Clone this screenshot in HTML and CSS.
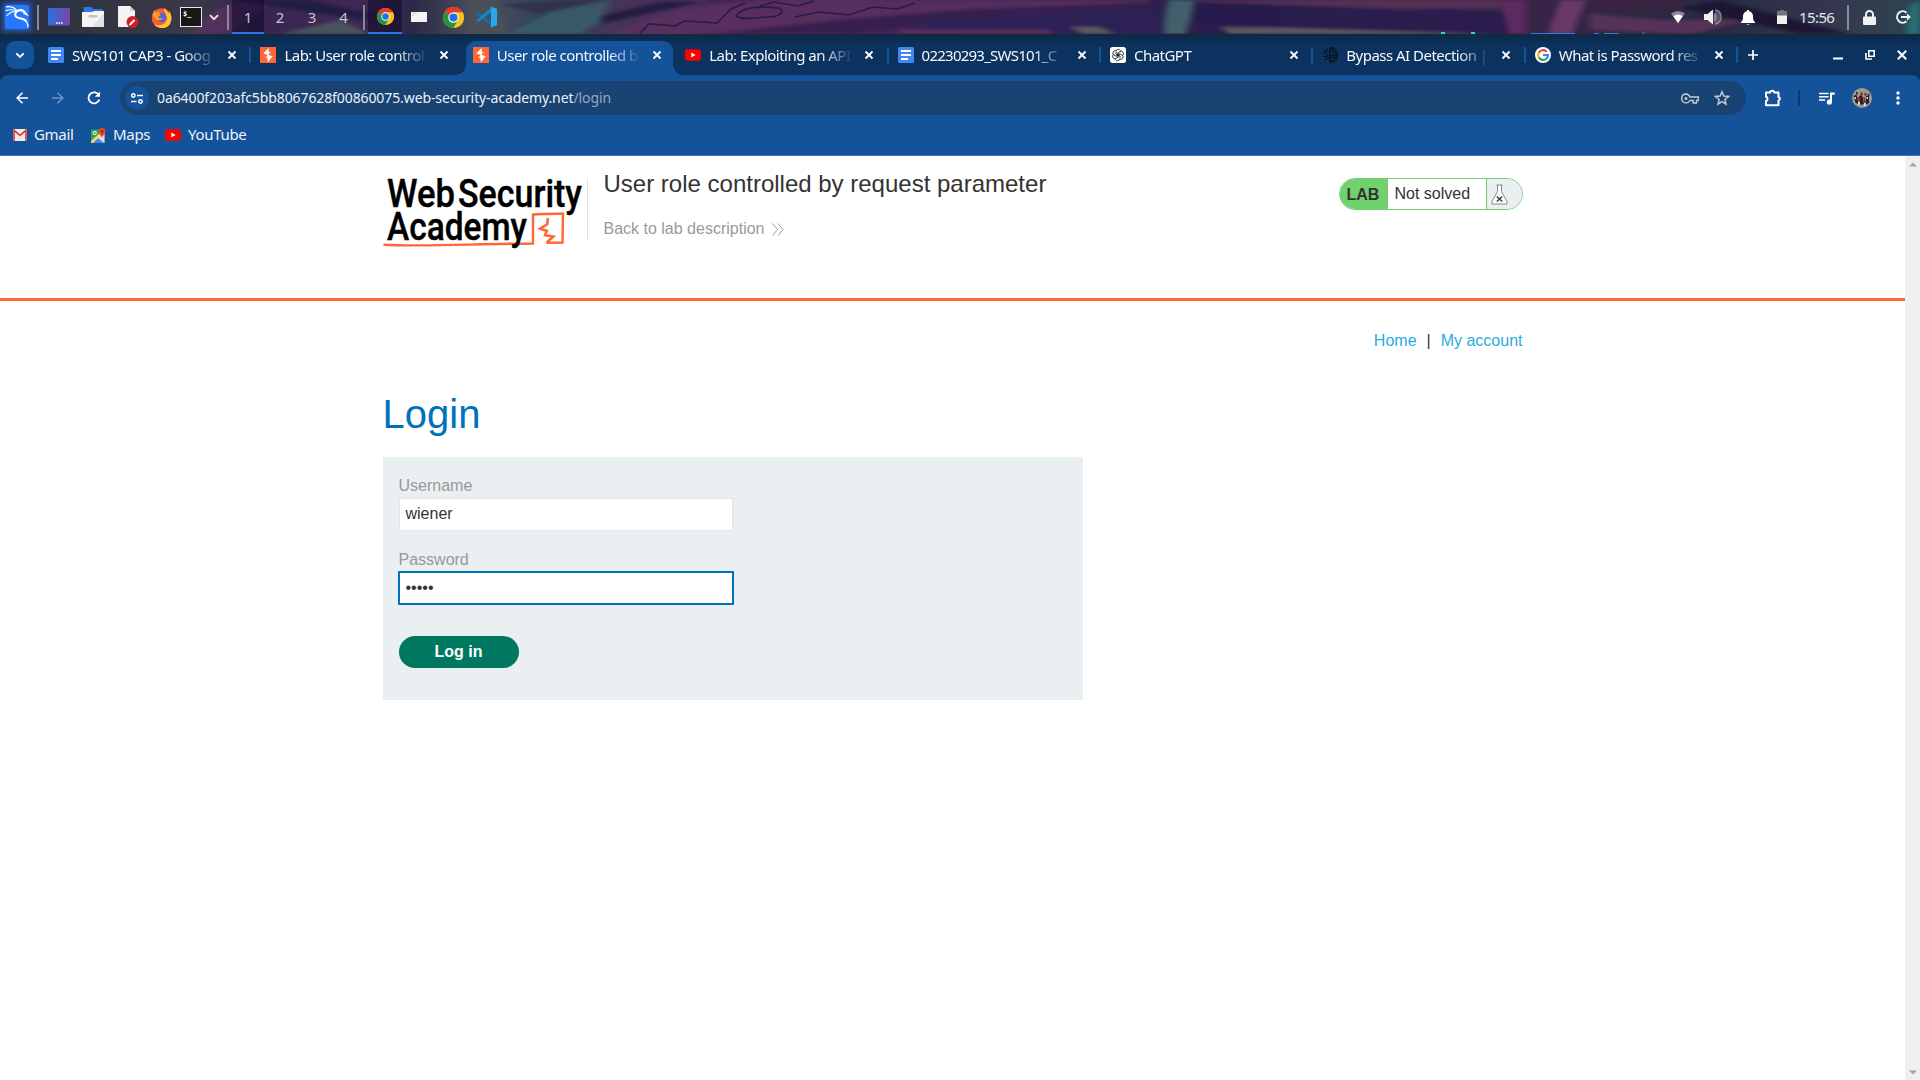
FILE: index.html
```html
<!DOCTYPE html>
<html lang="en">
<head>
<meta charset="utf-8">
<title>User role controlled by request parameter</title>
<link rel="stylesheet" href="styles.css">
</head>
<body>
<svg width="0" height="0" class="defs" aria-hidden="true">
  <defs>
    <linearGradient id="deskG" x1="0" x2="1"><stop offset="0" stop-color="#2f6fdc"/><stop offset="1" stop-color="#7648ad"/></linearGradient>
    <symbol id="close" viewBox="0 0 10 10"><path d="M1.500 1.500l7 7M8.500 1.500l-7 7" stroke="#fff" stroke-width="1.800" fill="none"/></symbol>
    <symbol id="doc" viewBox="0 0 16 16"><rect width="16" height="16" rx="1.500" fill="#4285f4"/><path d="M3 4h10M3 8h10M3 12h7" stroke="#fff" stroke-width="2"/></symbol>
    <symbol id="burp" viewBox="0 0 16 16"><rect width="16" height="16" fill="#ff6633"/><path d="M8.600 1L3.300 6.500 7.200 7.800v2L5 9.500l2.700 2.200V15.500L12.700 9.200 8.800 8V6l2.400.5-2.600-2.400z" fill="#fff"/></symbol>
    <symbol id="yt" viewBox="0 0 16 16"><rect y="2.300" width="16" height="11.400" rx="2.600" fill="#f00"/><path d="M6.300 5.500v5L10.600 8z" fill="#fff"/></symbol>
    <symbol id="chrome" viewBox="0 0 20 20"><circle cx="10" cy="10" r="10" fill="#fbc116"/><path d="M10 10L1.340 5A10 10 0 0 1 18.660 5z" fill="#e33b2e"/><path d="M10 5h8.660A10 10 0 0 0 1.340 5z" fill="#e33b2e"/><path d="M1.340 5A10 10 0 0 0 10 20l4.330-7.500L10 10z" fill="#229342"/><path d="M14.330 12.500L10 20A10 10 0 0 0 18.660 5H10z" fill="#fbc116"/><circle cx="10" cy="10" r="5" fill="#fff"/><circle cx="10" cy="10" r="3.900" fill="#1a73e8"/></symbol>
  </defs>
</svg>

<div class="panel">
  <svg class="wallpaper" viewBox="0 0 1920 34" preserveAspectRatio="none">
    <defs>
      <linearGradient id="wp" x1="0" x2="1">
        <stop offset="0" stop-color="#23304a"/><stop offset=".04" stop-color="#30343f"/><stop offset=".1" stop-color="#3c3848"/><stop offset=".13" stop-color="#35254f"/><stop offset=".18" stop-color="#412856"/><stop offset=".215" stop-color="#2c2948"/><stop offset=".25" stop-color="#4b525c"/><stop offset=".28" stop-color="#33445a"/><stop offset=".32" stop-color="#453457"/><stop offset=".38" stop-color="#50285d"/><stop offset=".45" stop-color="#432858"/><stop offset=".5" stop-color="#39235a"/><stop offset=".56" stop-color="#33244f"/><stop offset=".64" stop-color="#271d49"/><stop offset=".7" stop-color="#35304b"/><stop offset=".75" stop-color="#3e294f"/><stop offset=".8" stop-color="#372447"/><stop offset=".85" stop-color="#302741"/><stop offset=".9" stop-color="#292b44"/><stop offset=".96" stop-color="#353950"/><stop offset="1" stop-color="#2a4550"/>
      </linearGradient>
      <filter id="soft" x="-5%" y="-50%" width="110%" height="200%"><feGaussianBlur stdDeviation="3 1.600"/></filter>
    </defs>
    <rect width="1920" height="34" fill="url(#wp)"/>
    <g filter="url(#soft)">
      <path d="M190 34L215 10 250 0h22l-42 34z" fill="#6b2f72" opacity=".5"/>
      <path d="M232 0l130 20 10-6-60-14z" fill="#1c1540" opacity=".8"/>
      <path d="M280 34l60-14 30 14z" fill="#4a525b"/>
      <path d="M470 0h24l12 34h-36z" fill="#4c5057"/>
      <path d="M508 34L560 8 610 0 600 22 580 34z" fill="#37656b" opacity=".7"/>
      <path d="M500 4l80-4h30l-70 14z" fill="#31314e"/>
      <path d="M600 16l60-14 140-2h-90L600 24z" fill="#241c40"/>
      <path d="M610 34l60-22 90-12h390v3l-180 6-150 12-130 13z" fill="#5c305f" opacity=".8"/>
      <path d="M720 34l120-14 130-10 180-8v5l-130 7-170 20z" fill="#341d4c" opacity=".9"/>
      <path d="M930 20l240-10v24H920z" fill="#2a2057" opacity=".8"/>
      <path d="M1190 2l210 4 110 6v22h-90l-230-10z" fill="#251a4d" opacity=".8"/>
      <path d="M1190 0h310v8l-100 1-200-7z" fill="#563154" opacity=".9"/>
      <path d="M900 30h150v4H900z" fill="#5d2d5a"/>
      <path d="M1070 27h30l14 7h-30zM1220 27l70 1 200 6h-260z" fill="#5c5860"/>
      <path d="M1168 0h26l-8 34h-22z" fill="#43606c"/>
      <path d="M1500 0h26v34h-16z" fill="#5c2c60"/>
      <path d="M1560 0h26l-14 34h-24z" fill="#6b3966"/>
      <path d="M1590 14l70 6 90 0-60 14-100-4z" fill="#573258"/>
      <path d="M1592 0h90v10l-80-2z" fill="#3b2440"/>
      <path d="M1720 0l130 34h-50l-120-26z" fill="#1a1930"/>
      <path d="M1910 6l10-6v34h-14z" fill="#287173"/>
    </g>
    <path d="M640 33l9-9 26 2 10-5 32 2 14-14 14-6M736 16c6-10 24-10 42-8 10 3 0 9-10 9s-24 4-32-1M760 6l14-4 24 4 16-5M795 17l24-5 30 3 24-8 24 2 18-6" stroke="#2a1b45" stroke-width="1.700" fill="none"/>
    <path d="M1441 33h4M1471 33h4" stroke="#1ee0cf" stroke-width="2"/><path d="M1531 33.500h44M1594 33.500h5M1604 33.500h15M1642 33h3" stroke="#2b7bf0"/>
  </svg>
  <div class="panel-left">
    <span class="kali"><svg width="24" height="24" viewBox="0 0 24 24"><rect width="24" height="24" rx="1.500" fill="#2878ff"/><g fill="none" stroke="#fff" stroke-linecap="round"><path d="M1.300 1.800C6 1.300 9.500 2.500 12 5.800" stroke-width="1.300"/><path d="M1 5.500C5 4.300 9 4.500 12 6.200M2 10.500C4.500 7.500 8 6.200 12 6.500" stroke-width="1.100"/><path d="M12 6c3-1.300 6-.8 7.500 1.200" stroke-width="2.200"/><path d="M16 4.500l3.500 2 2.500 3.300-3.200-1.300" stroke-width="1.300"/><path d="M11.800 6.500C8.500 9.500 10.500 12.700 14.500 13.300c3.500.5 5.500 1.200 6.500 3" stroke-width="2"/><path d="M18 13.800c3 1.200 4.800 4 5 8.200" stroke-width="1.200"/></g></svg></span>
    <i class="bar"></i>
    <span class="cell w34"><svg width="22" height="18" viewBox="0 0 22 18"><rect width="22" height="17.500" rx="1" fill="url(#deskG)"/><path d="M8 15h1.500M10.500 15H12M13 15h1.500" stroke="#fff" stroke-width="1.500"/></svg></span>
    <span class="cell w34"><svg width="22" height="20" viewBox="0 0 22 20"><path d="M1.500 0h8l1.500 2h9.500v8h-19z" fill="#2f74e8"/><path d="M0 5h10l2-1h10v16H0z" fill="#f4f4f4"/><path d="M22 6v14H10z" fill="#e2e2e2"/><rect x="6.500" y="8" width="9" height="2.500" rx="1" fill="#c4c4c4"/></svg></span>
    <span class="cell w36"><svg width="21" height="22" viewBox="0 0 21 22"><path d="M0 0h12l5 5v16H0z" fill="#f3f3f3"/><path d="M12 0v5h5z" fill="#cfcfcf"/><circle cx="14.500" cy="16" r="6" fill="#d01f28"/><path d="M11.500 19l5-5" stroke="#fff" stroke-width="1.800"/></svg></span>
    <span class="cell w30"><svg width="21" height="21" viewBox="0 0 21 21"><circle cx="10.500" cy="11" r="9.800" fill="#ff5b2e"/><path d="M13 1c3 2 4 4 4 6 1-1 1-2 1-3 4 5 3 13-2 16-6 3-11 0-13-3 6 3 13 0 13-6 0-4-3-5-3-10z" fill="#ffc531"/><circle cx="10.500" cy="10.500" r="4.800" fill="#5265d8"/><path d="M1.500 8L3 3l2 2.500L8 5l1.500 3L7 10.500c2 1 3 1 5 0-1 3-5 4-8 1z" fill="#ff9b24"/></svg></span>
    <span class="cell w30"><span class="term">$_</span></span>
    <span class="cell w16"><svg width="10" height="7" viewBox="0 0 10 7"><path d="M1 1.200l4 4 4-4" fill="none" stroke="#eee" stroke-width="1.700"/></svg></span>
    <i class="bar bar2"></i>
    <span class="cell ws on">1</span><span class="cell ws">2</span><span class="cell ws">3</span><span class="cell ws w31">4</span>
    <i class="bar bar3"></i>
    <span class="cell w34 on"><svg width="17" height="17"><use href="#chrome"/></svg></span>
    <span class="cell w34"><svg width="16" height="10" viewBox="0 0 16 10"><rect width="16" height="10" fill="#f4f4f4"/><path d="M2 1.500h4M1 3.500h2" stroke="#ccc"/></svg></span>
    <span class="cell w34"><svg width="21" height="21"><use href="#chrome"/></svg></span>
    <span class="cell w34"><svg width="22" height="22" viewBox="0 0 22 22"><path d="M0 7.500L2 6l14 10.500V21z" fill="#0f70b3"/><path d="M0 14.500L2 16 16 5.500V1z" fill="#1387cf"/><path d="M15 .5l6 2.300v16.400L15 21.500z" fill="#2aa5f0"/></svg></span>
  </div>
  <div class="panel-right">
    <span class="cell w34"><svg width="16" height="14" viewBox="0 0 16 14"><path d="M1 3.500Q8-1.500 15 3.500L8 13z" fill="#8d8794"/><path d="M3.300 6.200Q8 3 12.700 6.200L8 13z" fill="#fff"/></svg></span>
    <span class="cell w36"><svg width="18" height="16" viewBox="0 0 18 16"><path d="M0 5h3.500L9 .5v15L3.500 11H0z" fill="#f0f0f0"/><path d="M10.500 4.500v7q3-3.500 0-7M11 1q6 .5 6 7t-6 7" fill="#8d8794" fill-opacity=".5" stroke="#8d8794" stroke-width="1.300"/></svg></span>
    <span class="cell w34"><svg width="14" height="15" viewBox="0 0 14 15"><path d="M7 0c1 0 1.300.6 1.300 1.300C11 2 12 4 12 6.500c0 3 .5 4.500 2 5.500v1H0v-1c1.500-1 2-2.500 2-5.500C2 4 3 2 5.700 1.300 5.700.6 6 0 7 0zM5 14h4q-2 1.500-4 0z" fill="#fff"/></svg></span>
    <span class="cell w34"><svg width="10" height="14" viewBox="0 0 10 14"><path d="M0 1h3V0h4v1h3v5H0z" fill="#77727c"/><rect y="5.500" width="10" height="8.500" fill="#f0f0f0"/></svg></span>
    <span class="clock">15:56</span>
    <i class="bar bar4"></i>
    <span class="cell w34"><svg width="13" height="15" viewBox="0 0 13 15"><path d="M3 7V4.500a3.500 3.500 0 0 1 7 0V7" fill="none" stroke="#f0f0f0" stroke-width="2"/><rect y="6.500" width="13" height="8.500" rx="1" fill="#f0f0f0"/></svg></span>
    <span class="cell w34"><svg width="15" height="14" viewBox="0 0 15 14"><path d="M10.500 2.700A5.700 5.700 0 1 0 10.500 11.300" fill="none" stroke="#f0f0f0" stroke-width="2"/><path d="M5 6h6V3.500L15 7l-4 3.500V8H5z" fill="#f0f0f0"/></svg></span>
  </div>
</div>

<div class="tabstrip">
  <span class="tab-search"><svg width="10" height="7" viewBox="0 0 10 7"><path d="M1.300 1.300L5 5l3.700-3.700" fill="none" stroke="#fff" stroke-width="1.900"/></svg></span>
  <div class="tab sep"><svg class="fav"><use href="#doc"/></svg><span class="label">SWS101 CAP3 - Goog</span><svg class="x"><use href="#close"/></svg></div>
  <div class="tab"><svg class="fav"><use href="#burp"/></svg><span class="label">Lab: User role control</span><svg class="x"><use href="#close"/></svg></div>
  <div class="tab active"><svg class="fav"><use href="#burp"/></svg><span class="label">User role controlled b</span><svg class="x"><use href="#close"/></svg></div>
  <div class="tab sep"><svg class="fav"><use href="#yt"/></svg><span class="label">Lab: Exploiting an API</span><svg class="x"><use href="#close"/></svg></div>
  <div class="tab sep"><svg class="fav"><use href="#doc"/></svg><span class="label wide">02230293_SWS101_C</span><svg class="x"><use href="#close"/></svg></div>
  <div class="tab sep"><svg class="fav" viewBox="0 0 16 16"><rect width="16" height="16" rx="2.500" fill="#fff"/><g fill="none" stroke="#222" stroke-width=".8"><path id="k" d="M6 7V4.500Q6 2.300 8.300 2.300q1.700 0 2.400 1.400M6 7l3.500 2"/><use href="#k" transform="rotate(60 8 8)"/><use href="#k" transform="rotate(120 8 8)"/><use href="#k" transform="rotate(180 8 8)"/><use href="#k" transform="rotate(240 8 8)"/><use href="#k" transform="rotate(300 8 8)"/></g></svg><span class="label">ChatGPT</span><svg class="x"><use href="#close"/></svg></div>
  <div class="tab sep"><svg class="fav" viewBox="0 0 16 16"><g fill="none" stroke="#05101c" stroke-width="1.100"><path d="M8 .5v15M5 1.500v3L2.500 6H.5M5 6.500v3H1M3 13l2-2h2M2 3.500h2M6.500 4H8M6.500 8H8M8 2h4M8 5h6M8 8h8M8 11h6M8 14h4M11 2v3M13 5v3M11 8v3M14 8v3"/><path d="M8 .5A7.500 7.500 0 0 1 8 15.500"/></g></svg><span class="label">Bypass AI Detection |</span><svg class="x"><use href="#close"/></svg></div>
  <div class="tab sep"><svg class="fav" viewBox="0 0 16 16"><circle cx="8" cy="8" r="8" fill="#fff"/><g fill="none" stroke-width="2.200"><path d="M11.700 4.800A5 5 0 0 0 3.700 5.700" stroke="#ea4335"/><path d="M3.700 5.700a5 5 0 0 0 0 4.600" stroke="#fbbc05"/><path d="M3.700 10.300a5 5 0 0 0 7.600 1.500" stroke="#34a853"/><path d="M11.300 11.800A5 5 0 0 0 13 8H8" stroke="#4285f4"/></g></svg><span class="label">What is Password res</span><svg class="x"><use href="#close"/></svg></div>
  <svg class="plus" width="10" height="10" viewBox="0 0 10 10"><path d="M5 0v10M0 5h10" stroke="#fff" stroke-width="1.700"/></svg>
  <div class="winctl">
    <svg width="10" height="12" viewBox="0 0 10 12"><path d="M0 9.500h10" stroke="#fff" stroke-width="2"/></svg>
    <svg width="10" height="10" viewBox="0 0 10 10"><path d="M3.800.8h5.400v5.400H3.800zM1 3v6h6" fill="none" stroke="#fff" stroke-width="1.600"/></svg>
    <svg width="10" height="10" viewBox="0 0 10 10"><path d="M.8.8l8.400 8.400M9.200.8L.8 9.200" stroke="#fff" stroke-width="2"/></svg>
  </div>
</div>

<div class="frame">
<div class="chrome">
  <div class="toolbar">
    <svg width="12" height="12" viewBox="0 0 12 12"><path d="M12 6H1.500M6.500.8L1.200 6l5.300 5.200" fill="none" stroke="#fff" stroke-width="1.600"/></svg>
    <svg width="12" height="12" viewBox="0 0 12 12"><path d="M0 6h10.500M5.500.8L10.800 6l-5.300 5.200" fill="none" stroke="#6c93c3" stroke-width="1.600"/></svg>
    <svg width="14" height="14" viewBox="0 0 14 14"><path d="M12 4.500A5.500 5.500 0 1 0 12.300 8.500" fill="none" stroke="#fff" stroke-width="1.800"/><path d="M13 .5v5.200H7.800z" fill="#fff"/></svg>
    <div class="omnibox">
      <span class="site"><svg width="12" height="11" viewBox="0 0 12 11"><g fill="none" stroke="#fff" stroke-width="1.500"><circle cx="2.300" cy="2.500" r="1.700"/><path d="M6 2.500h6M0 8.500h5.500"/><circle cx="9.500" cy="8.500" r="1.700"/></g></svg></span>
      <span class="url">0a6400f203afc5bb8067628f00860075.web-security-academy.net<i>/login</i></span>
      <svg class="key" width="18" height="11" viewBox="0 0 18 11"><path d="M5 1a4.400 4.400 0 1 0 3.900 6.500h3.300V10h3.300V7.500H17.300V4H8.900A4.400 4.400 0 0 0 5 1z" fill="none" stroke="#c3cad3" stroke-width="1.400"/><circle cx="5" cy="5.500" r="1.500" fill="#c3cad3"/></svg>
      <svg width="16" height="16" viewBox="0 0 16 16"><path d="M8 1.800l1.800 4.300 4.700.4L10.900 9.500l1.100 4.600L8 11.700 4 14.100l1.100-4.600L1.500 6.500l4.700-.4z" fill="none" stroke="#c3cad3" stroke-width="1.500"/></svg>
    </div>
    <svg class="puzzle" width="18" height="18" viewBox="0 0 18 18"><path d="M2 3.500h4.200a2 1.800 0 0 1 4 0H14.500V8a1.900 1.900 0 0 1 0 3.600v4.600H2v-4.200a2.200 2.200 0 0 0 0-4.200z" fill="none" stroke="#fff" stroke-width="2" stroke-linejoin="round"/></svg>
    <i class="tsep"></i>
    <svg class="music" width="16" height="13" viewBox="0 0 16 13"><path d="M0 1.500h9.500M0 4.700h9.500M0 8h6" stroke="#fff" stroke-width="1.600"/><path d="M11 .5h4.700v2.200H13V10a2.600 2.600 0 1 1-2-2.500z" fill="#fff"/></svg>
    <svg class="avatar" width="20" height="20" viewBox="0 0 20 20"><circle cx="10" cy="10" r="10" fill="#a3988f"/><path d="M1.500 8l3-1.500 2 10-3-2zM7 8l3-1 2 9-4 1zM14 8l3-1v8l-3 2z" fill="#20242e"/><path d="M5 9h2.500v4H5zM11 9h2l1 6h-2z" fill="#a62b35"/><path d="M4 4h2v2.500H4zM8.500 4.500h2V7h-2zM12.500 5h2v2.500h-2zM16 5.500h1.500V8H16z" fill="#4c3229"/><path d="M6 14h2v3H6zM12 15h2v3h-2zM2.500 9H4v2H2.500zM14.500 9H16v2h-1.500z" fill="#d5dae0"/></svg>
    <svg class="dots" width="4" height="14" viewBox="0 0 4 14"><g fill="#fff"><circle cx="2" cy="2" r="1.700"/><circle cx="2" cy="7" r="1.700"/><circle cx="2" cy="12" r="1.700"/></g></svg>
  </div>
  <div class="bookmarks">
    <svg width="14" height="12" viewBox="0 0 14 12"><rect width="14" height="12" rx="1" fill="#eceaea"/><path d="M1 12V1.300L7 6.500l6-5.200V12" fill="none" stroke="#d6403a" stroke-width="1.700"/></svg><span class="gm">Gmail</span>
    <svg width="15" height="15" viewBox="0 0 15 15"><rect y="1.500" width="13.500" height="13.500" rx="1" fill="#34a853"/><path d="M13.500 5v10H9L5 9z" fill="#dfe3e6"/><path d="M2 15l5-5 6 5z" fill="#4285f4"/><path d="M0 13L12 2l1.500 2L2 15H0z" fill="#fdd663"/><circle cx="3.700" cy="5" r="1.600" fill="none" stroke="#fff"/><path d="M11 0a3.400 3.400 0 0 1 3.400 3.400C14.400 6 11.500 7 11 10c-.5-3-3.400-4-3.400-6.600A3.400 3.400 0 0 1 11 0z" fill="#ea4335"/><circle cx="11" cy="3.400" r="1.200" fill="#8c1d14"/></svg><span class="mp">Maps</span>
    <svg width="16" height="16"><use href="#yt"/></svg><span>YouTube</span>
  </div>
</div>
</div>

<div class="view">
  <div class="page">
    <header>
      <div class="wrap head">
        <svg class="logo" width="204" height="78" viewBox="0 0 204 78">
          <path d="M.5 66.700C40 69 90 65.800 150 65.500V36.500c10-.8 20-.7 30-.7l-.5 28.700-16 .4" fill="none" stroke="#ff6633" stroke-width="2.400"/>
          <path d="M165 40l-.8 6.300-7 4.400 6.600 2.200-1.800 4.300 8.300 1.300-6.500 6" fill="none" stroke="#ff6633" stroke-width="2.600"/>
          <g class="logotext"><text x="4" y="29" textLength="68" lengthAdjust="spacingAndGlyphs">Web</text><text x="75" y="29" textLength="124" lengthAdjust="spacingAndGlyphs">Security</text><text x="4" y="61.500" textLength="140" lengthAdjust="spacingAndGlyphs">Academy</text></g>
        </svg>
        <div class="title"><h2>User role controlled by request parameter</h2>
          <a class="back">Back to lab description <svg width="12" height="13" viewBox="0 0 12 13"><path d="M.5.500l5 6-5 6M6 .5l5 6-5 6" fill="none" stroke="#999"/></svg></a></div>
        <div class="status"><b>LAB</b><span>Not solved</span><em><svg width="17" height="21" viewBox="0 0 17 21"><path d="M5.500 1h6M6.500 1v6.500L1 17.500v2.500h15v-2.500L10.500 7.500V1" fill="#fff" stroke="#888"/><path d="M5.800 12.500l5.400 5M11.200 12.500l-5.400 5" stroke="#333" stroke-width="1.300"/></svg></em></div>
      </div>
    </header>
    <main class="wrap">
      <nav><a>Home</a><span>|</span><a>My account</a></nav>
      <h1>Login</h1>
      <form>
        <label>Username</label>
        <div class="field">wiener</div>
        <label>Password</label>
        <div class="field focus">•••••</div>
        <div class="btn">Log in</div>
      </form>
    </main>
  </div>
  <div class="scroll"><svg width="8" height="5" viewBox="0 0 8 5"><path d="M4 .5l4 4H0z" fill="#a3a3a3"/></svg><svg width="8" height="5" viewBox="0 0 8 5"><path d="M0 .5h8l-4 4z" fill="#a3a3a3"/></svg></div>
</div>
</body>
</html>
```
FILE: styles.css
```css
* { box-sizing: border-box; }
body { margin: 0; width: 1920px; height: 1080px; overflow: hidden; display: flex; flex-direction: column; background: #fff; font-family: "Noto Sans", sans-serif; }
.defs { position: absolute; }
svg { display: block; flex: none; }

/* desktop panel */
.panel { position: relative; height: 35px; flex: none; display: flex; justify-content: space-between; border-bottom: 1px solid #20262d; }
.wallpaper { position: absolute; inset: 0; width: 1920px; height: 34px; }
.panel-left, .panel-right { position: relative; display: flex; height: 34px; align-items: center; }
.kali { margin-left: 5px; width: 24px; box-shadow: 0 0 5px 2px #2260c8; }
.bar { width: 2px; height: 25px; background: #8b8991; margin: 0 3px 0 8px; flex: none; }
.bar2 { margin: 0 3px 0 5px; }
.bar3 { margin: 0 3px 0 4px; }
.bar4 { margin: 0 3px 0 11px; }
.cell { display: flex; align-items: center; justify-content: center; height: 34px; flex: none; }
.w34 { width: 34px; }
.w36 { width: 36px; }
.w30 { width: 30px; }
.w16 { width: 16px; }
.ws { width: 32px; font-size: 15px; color: #c3c5cc; padding-bottom: 1px; }
.ws.w31 { width: 31px; }
.on { background: rgba(16, 10, 40, .55); border-bottom: 2px solid #2a74f5; }
.ws.on { padding: 2px 0 1px; }
.term { width: 22px; height: 20px; background: #171717; border: 1px solid #e8e8e8; color: #fff; font: bold 7px/12px "DejaVu Sans Mono", monospace; padding-left: 2px; }
.clock { width: 37px; font-size: 15px; color: #e5e5ea; line-height: 20px; letter-spacing: -.6px; white-space: nowrap; padding-bottom: 1px; }

/* tab strip */
.tabstrip { height: 40px; flex: none; display: flex; align-items: center; padding-left: 6px; background: linear-gradient(#0b2a4c, #0c335f 30%, #0c335f); }
.tab-search { width: 28px; height: 28px; border-radius: 9px; background: #145299; display: flex; align-items: center; justify-content: center; margin-right: 2px; }
.tab { position: relative; width: 212.400px; height: 34px; display: flex; align-items: center; padding: 0 10px 6px 12px; flex: none; align-self: flex-end; }
.sep::after { content: ""; position: absolute; right: -3px; top: 6px; width: 2px; height: 16px; background: #14539c; }
.active { z-index: 1; }
.active::before { content: ""; position: absolute; z-index: -1; left: 5px; right: 0; top: 0; bottom: 0; background: #145299; border-radius: 10px 10px 0 0; }
.active::after { content: ""; position: absolute; z-index: -1; left: -5px; right: -10px; bottom: 0; height: 10px; background: radial-gradient(circle at 0 0, transparent 9.500px, #145299 10px) left / 10px 10px no-repeat, radial-gradient(circle at 100% 0, transparent 9.500px, #145299 10px) right / 10px 10px no-repeat; }
.fav { width: 16px; height: 16px; margin-right: 8px; }
.label { width: 145px; white-space: nowrap; color: #f4f7fb; font-size: 15px; line-height: 22px; letter-spacing: -.52px; -webkit-mask-image: linear-gradient(90deg, #000 112px, transparent 144px); mask-image: linear-gradient(90deg, #000 112px, transparent 144px); }
.wide { letter-spacing: -.75px; }
.x { width: 10px; height: 10px; margin-left: 10px; }
.plus { margin-left: 13px; }
.winctl { margin-left: auto; display: flex; gap: 22px; padding-right: 13px; align-items: center; }

/* toolbar and bookmarks */
.frame { height: 81px; flex: none; background: #0c335f; }
.chrome { height: 81px; background: #145299; border-bottom: 1px solid #4575b3; border-radius: 8px 8px 0 0; }
.toolbar { display: flex; align-items: center; height: 46px; padding-left: 16px; }
.toolbar > svg:nth-child(2) { margin-left: 24px; }
.toolbar > svg:nth-child(3) { margin-left: 23px; }
.omnibox { width: 1626px; height: 34px; margin-left: 19px; border-radius: 17px; background: #194373; display: flex; align-items: center; padding: 0 16px 0 5px; }
.site { width: 24px; height: 24px; border-radius: 50%; background: #145299; display: flex; align-items: center; justify-content: center; }
.url { margin-left: 8px; padding-bottom: 1px; font-size: 14px; letter-spacing: -.1px; color: #edf1f6; white-space: nowrap; }
.url i { font-style: normal; color: #93a9c4; }
.key { margin-left: auto; margin-right: 15px; }
.puzzle { margin-left: 18px; }
.tsep { width: 2px; height: 16px; background: #0c386b; margin-left: 16px; }
.music { margin-left: 19px; }
.avatar { margin-left: 17px; }
.dots { margin-left: 24px; }
.bookmarks { height: 28px; display: flex; align-items: center; padding-left: 13px; font-size: 15px; letter-spacing: -.3px; color: #eef3f9; }
.bookmarks span { margin-left: 7px; padding-bottom: 2px; white-space: nowrap; }
.gm { width: 57px; }
.mp { width: 52px; }

/* web page */
.view { flex: 1; display: flex; background: #fff; font-family: "Liberation Sans", Arial, sans-serif; color: #333332; }
.page { flex: 1; }
.scroll { width: 15px; background: #f0f0f0; display: flex; flex-direction: column; justify-content: space-between; align-items: center; padding: 6px 0 5px; }
.wrap { width: 1140px; margin: 0 auto; }
header { height: 145px; border-bottom: 3px solid #ff6633; }
.head { display: flex; align-items: flex-start; }
.logo { margin-top: 22px; }
.logotext { font: 500 38px Roboto, sans-serif; fill: #000; stroke: #000; stroke-width: .4px; }
.title { margin-top: 22px; height: 62px; border-left: 1px solid #e4e4e4; padding-left: 16px; }
h2 { margin: -8px 0 0; font-size: 24px; font-weight: 400; line-height: 28px; }
.back { display: flex; align-items: center; gap: 8px; margin-top: 22px; font-size: 16px; line-height: 18px; color: #999; }
.status { margin: 22px 0 0 auto; width: 184px; height: 32px; border: 1px solid #70d16e; border-radius: 16px; overflow: hidden; display: flex; font-size: 16px; line-height: 30px; background: #fff; }
.status b { width: 48px; background: #70d16e; padding-left: 7px; line-height: 32px; }
.status span { width: 98px; padding-left: 7px; white-space: nowrap; }
.status em { flex: 1; background: #eaeff2; border-left: 1px solid #70d16e; padding: 5px 0 0 4px; }
nav { display: flex; justify-content: flex-end; gap: 10px; padding-top: 31px; font-size: 16px; line-height: 18px; }
nav a { color: #29abe2; }
h1 { margin: 41px 0 0; font-size: 40px; font-weight: 400; line-height: 46px; color: #0071bc; }
form { width: 700px; height: 243px; margin-top: 20px; background: #eaeff2; padding: 20px 16px; }
label { display: block; font-size: 16px; line-height: 18px; color: #999; }
.field { width: 334px; height: 33px; margin: 3px 0 20px; background: #fff; border: 1px solid #e4e4e4; padding-left: 6px; font-size: 16px; line-height: 30px; }
.focus { width: 336px; height: 34px; margin: 2px 0 31px -1px; border: 2px solid #0071bc; line-height: 29px; }
.btn { width: 120px; height: 32px; border-radius: 16px; background: #00775f; color: #fff; font-weight: 700; font-size: 16px; line-height: 31px; text-align: center; }
```
